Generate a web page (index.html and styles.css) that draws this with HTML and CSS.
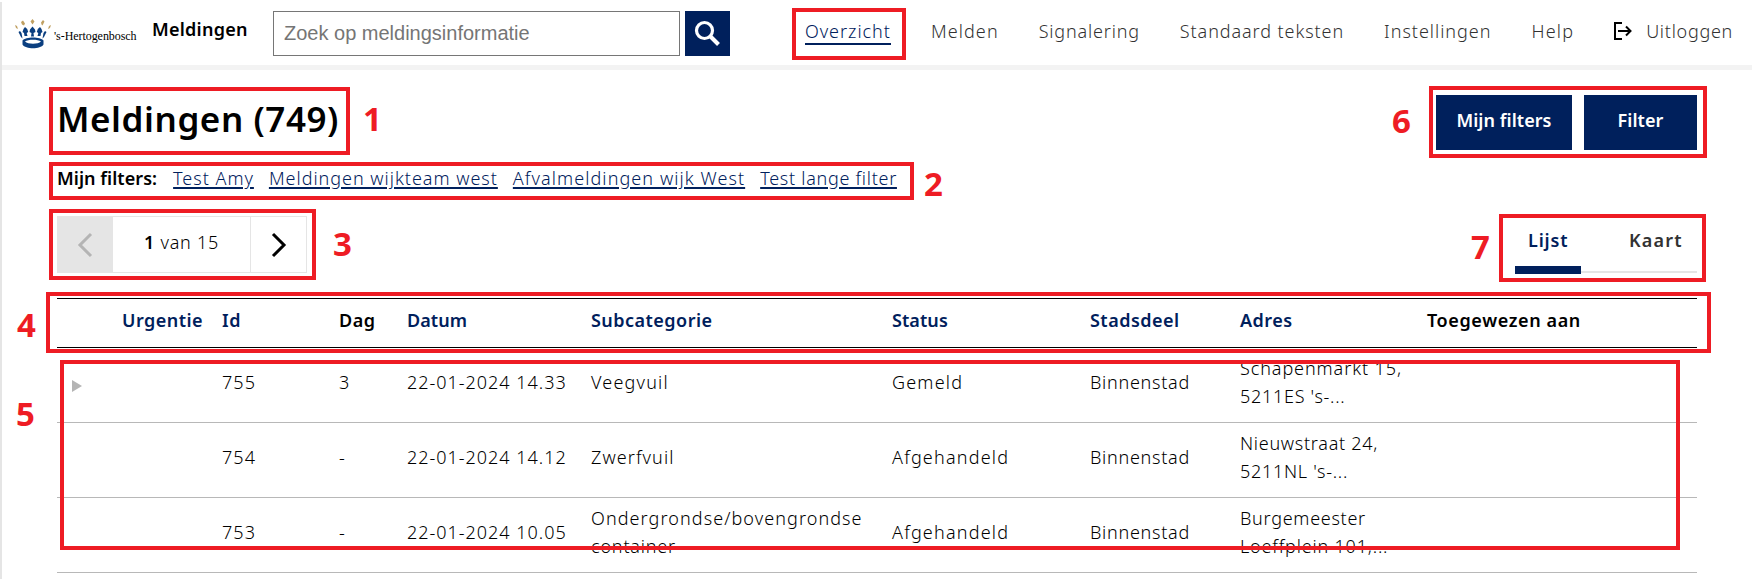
FILE: index.html
```html
<!DOCTYPE html>
<html lang="nl">
<head>
<meta charset="utf-8">
<title>Meldingen</title>
<link rel="stylesheet" href="styles.css">
</head>
<body>
<div class="page">
  <header class="header">
    <div class="brand">
      <svg class="crown" width="36" height="32" viewBox="0 0 36 32">
        <g fill="#c0a062"><path d="M0 7l2 1 1 3-2-1zM6 4l2-1.500 2 3-1 2-2-1zM17.500 1l2 2.500-2 3-2-3zM28 2l1.500 1.500-2 4-1-1-.5-2zM36 7l-2 1-1 3 2-1z"/></g>
        <g fill="#0b3f80"><path d="M3.500 14l1.500-1 1.500 2 1 5.500-1.500-1.500zM10 9l2.200 2 1 3-1.500 1 .8 3h-3l-.5-3-1.500-1 1-3zM17.500 8.500l2.500 3 .5 2.500-2 1 .5 3.500h-3l.5-3.500-2-1 .5-2.500zM25 9l1.500 2 1 3-1.500 1-.5 3h-3l.8-3-1.500-1 1-3zM31.500 14l-1.500-1-1.500 2-1 5.500 1.500-1.500z"/>
        <path fill-rule="evenodd" d="M7.500 22.500c3-4 18-4 21 0v4c-3 5-18 5-21 0zM10 23.500c3 3 13 3 16 0-3-2.500-13-2.500-16 0z"/></g>
      </svg>
      <span class="city">'s-Hertogenbosch</span>
    </div>
    <strong class="app">Meldingen</strong>
    <div class="search">
      <input class="search-input" type="text" placeholder="Zoek op meldingsinformatie">
      <button class="search-btn" aria-label="Zoek"><svg width="45" height="45" viewBox="0 0 45 45" fill="none" stroke="#fff"><circle cx="19.500" cy="19.500" r="8" stroke-width="3.200"/><path d="M25.500 25.500l8 8" stroke-width="4"/></svg></button>
    </div>
    <nav class="nav">
      <a class="nav-link active s10">Overzicht</a>
      <a class="nav-link s11">Melden</a>
      <a class="nav-link s8">Signalering</a>
      <a class="nav-link s9">Standaard teksten</a>
      <a class="nav-link s10">Instellingen</a>
      <a class="nav-link s12">Help</a>
      <a class="nav-link logout s7"><svg width="18" height="18" viewBox="0 0 18 18" fill="none" stroke="#000" stroke-width="2"><path d="M8 1H1v16h7M4 9h12.500M12 4.500L16.500 9 12 13.500"/></svg>Uitloggen</a>
    </nav>
  </header>
  <main class="main">
    <section class="titlebar">
      <h1 class="title">Meldingen (749)</h1>
      <div class="actions"><button class="btn btn-mine">Mijn filters</button><button class="btn btn-filter">Filter</button></div>
    </section>
    <section class="filters">
      <strong class="filters-label">Mijn filters:</strong>
      <a class="filter-link s10">Test Amy</a>
      <a class="filter-link s10">Meldingen wijkteam west</a>
      <a class="filter-link s11">Afvalmeldingen wijk West</a>
      <a class="filter-link s7">Test lange filter</a>
    </section>
    <section class="controls">
      <div class="pager">
        <span class="prev"><svg width="16" height="26" viewBox="0 0 16 26" fill="none" stroke="#b4b4b4" stroke-width="3"><path d="M14 2L3 13l11 11"/></svg></span>
        <span class="count s7"><b>1</b> van 15</span>
        <span class="next"><svg width="16" height="26" viewBox="0 0 16 26" fill="none" stroke="#000" stroke-width="3"><path d="M2 2l11 11L2 24"/></svg></span>
      </div>
      <div class="tabs"><span class="tab on s8">Lijst</span><span class="tab s12">Kaart</span></div>
    </section>
    <section class="table">
      <div class="row head"><span></span><span>Urgentie</span><span>Id</span><span class="plain">Dag</span><span class="s0">Datum</span><span>Subcategorie</span><span class="s0">Status</span><span>Stadsdeel</span><span>Adres</span><span class="plain wide">Toegewezen aan</span></div>
      <div class="row"><span><svg class="play" width="10" height="12" viewBox="0 0 10 12"><path d="M0 0l10 6-10 6z" fill="#b4b4b4"/></svg></span><span></span><span class="s11">755</span><span>3</span><span class="s10">22-01-2024 14.33</span><span class="s12">Veegvuil</span><span class="s12">Gemeld</span><span class="s7">Binnenstad</span><span class="s9">Schapenmarkt 15,<br><span class="s7">5211ES 's-...</span></span><span></span></div>
      <div class="row"><span></span><span></span><span class="s11">754</span><span>-</span><span class="s10">22-01-2024 14.12</span><span class="s11">Zwerfvuil</span><span class="s12">Afgehandeld</span><span class="s7">Binnenstad</span><span class="s7">Nieuwstraat 24,<br>5211NL 's-...</span><span></span></div>
      <div class="row"><span></span><span></span><span class="s11">753</span><span>-</span><span class="s10">22-01-2024 10.05</span><span class="s11">Ondergrondse/bovengrondse<br><span class="s8">container</span></span><span class="s12">Afgehandeld</span><span class="s7">Binnenstad</span><span class="s7">Burgemeester<br><span class="s8">Loeffplein 101,...</span></span><span></span></div>
    </section>
  </main>
</div>
<div class="mark mark-nav"></div>
<div class="mark mark-1"></div><span class="num num-1">1</span>
<div class="mark mark-2"></div><span class="num num-2">2</span>
<div class="mark mark-3"></div><span class="num num-3">3</span>
<div class="mark mark-4"></div><span class="num num-4">4</span>
<div class="mark mark-5"></div><span class="num num-5">5</span>
<div class="mark mark-6"></div><span class="num num-6">6</span>
<div class="mark mark-7"></div><span class="num num-7">7</span>
</body>
</html>
```
FILE: styles.css
```css
* { box-sizing: border-box; }
body {
  position: relative;
  height: 579px;
  margin: 0;
  padding-top: 2px;
  overflow: hidden;
  background: #fff;
  color: #000;
  font: 300 18px/28px "Noto Sans", sans-serif;
}
.page { height: 577px; border-left: 2px solid #e5e5e5; }

/* letter spacing steps */
.s0 { letter-spacing: .07px; }
.s7 { letter-spacing: .72px; }
.s8 { letter-spacing: .82px; }
.s9 { letter-spacing: .91px; }
.s10 { letter-spacing: .98px; }
.s11 { letter-spacing: 1.08px; }
.s12 { letter-spacing: 1.19px; }

/* header */
.header { display: flex; align-items: flex-start; height: 68px; padding-right: 19px; border-bottom: 5px solid #f3f3f3; }
.brand { display: flex; width: 137px; margin-left: 13px; padding-top: 16px; gap: 3px; }
.crown { flex: none; }
.city { padding-top: 4px; font: 400 12px/28px "Liberation Serif", serif; letter-spacing: -.06px; white-space: nowrap; }
.app { width: 121px; padding-top: 13px; font-weight: 600; letter-spacing: .25px; }
.search { display: flex; gap: 5px; padding-top: 9px; }
.search-input { width: 407px; height: 45px; padding: 0 10px; border: 1px solid #767676; font: 20px "Liberation Sans", Arial, sans-serif; }
.search-input::placeholder { color: #757575; }
.search-btn { width: 45px; height: 45px; padding: 0; border: 0; background: #00205c; }
.search-btn svg { display: block; }
.nav { display: flex; gap: 40px; margin-left: auto; padding-top: 15px; color: #323232; white-space: nowrap; }
.active { height: 28px; border-bottom: 2px solid #00205c; color: #00205c; }
.logout { display: flex; gap: 14px; }
.logout svg { margin-top: 5px; }

/* title row */
.main { width: 1640px; margin-left: 55px; }
.titlebar { display: flex; justify-content: space-between; align-items: flex-start; height: 94px; padding-top: 25px; }
.title { margin: 0; font-size: 35px; line-height: 48px; font-weight: 600; letter-spacing: .56px; }
.actions { display: flex; gap: 12px; }
.btn { height: 55px; padding: 0 0 5px; border: 0; background: #00205c; color: #fff; font: 600 18px/28px "Noto Sans", sans-serif; letter-spacing: .05px; }
.btn-mine { width: 136px; }
.btn-filter { width: 113px; }

/* saved filters */
.filters { display: flex; gap: 15px; height: 52px; white-space: nowrap; }
.filters-label { margin-right: 1px; font-weight: 600; letter-spacing: .05px; }
.filter-link { color: #00205c; text-decoration: underline; text-decoration-thickness: 2px; text-underline-offset: 2px; }

/* pager and tabs */
.controls { display: flex; justify-content: space-between; height: 82px; }
.pager { display: flex; width: 250px; height: 57px; border: 1px solid #e5e5e5; }
.prev, .next { display: flex; align-items: center; justify-content: center; width: 55px; }
.prev { padding-right: 1px; background: #e5e5e5; }
.next { width: 56px; border-left: 1px solid #e5e5e5; }
.count { flex: 1; padding-top: 11px; text-align: center; }
.count b { font-weight: 600; }
.tabs { display: flex; width: 182px; height: 58px; }
.tab { flex: 1; height: 57px; padding: 10px 0 0 48px; color: #323232; font-weight: 600; background: linear-gradient(#e5e5e5, #e5e5e5) 0 55px / 100% 2px no-repeat; }
.tab.on { flex: 0 0 66px; height: 58px; padding-left: 13px; border-bottom: 8px solid #00205c; color: #00205c; background: none; }

/* table */
.row { display: grid; grid-template-columns: 65px 100px 117px 68px 184px 301px 198px 150px 187px 1fr; align-items: center; height: 75px; padding-bottom: 7px; border-bottom: 1px solid #b8b8b8; white-space: nowrap; }
.row.head { height: 50px; padding: 7px 0 0; border-top: 1px solid #000; border-bottom-color: #000; color: #00205c; font-weight: 600; letter-spacing: .47px; align-items: start; }
.row .plain { color: #000; }
.row .wide { letter-spacing: .62px; }
.play { display: block; margin: 9px 0 0 15px; }

/* annotations */
.mark { position: absolute; border: 4px solid #ee1c24; }
.mark-nav { left: 792px; top: 8px; width: 114px; height: 52px; }
.mark-1 { left: 49px; top: 87px; width: 301px; height: 68px; }
.mark-2 { left: 49px; top: 162px; width: 865px; height: 38px; }
.mark-3 { left: 49px; top: 209px; width: 267px; height: 71px; }
.mark-4 { left: 46px; top: 292px; width: 1665px; height: 61px; }
.mark-5 { left: 60px; top: 360px; width: 1620px; height: 190px; }
.mark-6 { left: 1429px; top: 86px; width: 278px; height: 72px; }
.mark-7 { left: 1499px; top: 214px; width: 207px; height: 68px; }
.num { position: absolute; color: #ee1c24; font: 700 33px/46px "Noto Sans", sans-serif; }
.num-1 { left: 363px; top: 96px; }
.num-2 { left: 924px; top: 161px; }
.num-3 { left: 333px; top: 221px; }
.num-4 { left: 17px; top: 302px; }
.num-5 { left: 16px; top: 391px; }
.num-6 { left: 1392px; top: 98px; }
.num-7 { left: 1471px; top: 224px; }
```
